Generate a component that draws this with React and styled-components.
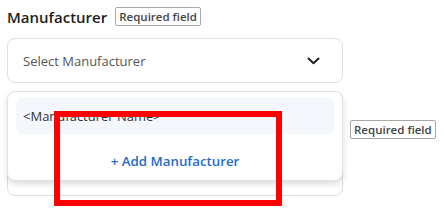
import React from "react";
import styled, { createGlobalStyle } from "styled-components";

const GlobalStyle = createGlobalStyle`
  body {
    margin: 0;
    background: #fff;
    font-family: "Open Sans", "Liberation Sans", sans-serif;
  }
`;

const Page = styled.div`
  position: relative;
  width: 445px;
  height: 212px;
  overflow: hidden;
  padding: 7px 0 0 7px;
  box-sizing: border-box;
`;

const Field = styled.div`
  position: relative;
  width: 336px;
  margin-bottom: ${(p) => p.$gap || 0}px;
`;

const LabelRow = styled.div`
  display: flex;
  align-items: center;
  gap: 8px;
  height: 19px;
  margin-bottom: 12px;
`;

const Title = styled.span`
  font-size: 15px;
  font-weight: 600;
  color: #1e1e1e;
  min-width: ${(p) => p.$minWidth || 0}px;
  visibility: ${(p) => (p.$covered ? "hidden" : "visible")};
`;

const Badge = styled.span`
  border: 1px solid #a8a8a8;
  border-radius: 2px;
  padding: 0 3px;
  font-size: 11.5px;
  line-height: 17px;
  font-weight: 600;
  color: #444;
  white-space: nowrap;
`;

const Select = styled.div`
  display: flex;
  align-items: center;
  justify-content: space-between;
  height: 45px;
  box-sizing: border-box;
  border: 1px solid #dedede;
  border-radius: 8px;
  padding: 0 22px 0 15px;
  font-size: 13px;
  color: #555;
  background: #fff;
`;

const Dropdown = styled.div`
  position: absolute;
  left: 0;
  top: 84px;
  width: 336px;
  height: 90px;
  box-sizing: border-box;
  background: #fff;
  border: 1px solid #e2e2e2;
  border-radius: 8px;
  box-shadow: 0 3px 6px rgba(0, 0, 0, 0.14);
  padding: 6px 8px 0;
  display: flex;
  flex-direction: column;
  z-index: 2;
`;

const Option = styled.div`
  height: 36px;
  display: flex;
  align-items: center;
  padding: 0 7px;
  border-radius: 6px;
  background: #f4f7fc;
  font-size: 13px;
  color: #333;
`;

const AddButton = styled.div`
  flex: 1;
  display: flex;
  align-items: center;
  justify-content: center;
  padding-top: 8px;
  font-size: 13.3px;
  font-weight: 600;
  color: #1f6cc4;
`;

const Highlight = styled.div`
  position: absolute;
  left: 54px;
  top: 111px;
  width: 228px;
  height: 95px;
  box-sizing: border-box;
  border: 6px solid #ff0000;
  z-index: 3;
`;

const Chevron = () => (
  <svg width="13" height="8" viewBox="0 0 13 8" fill="none">
    <path d="M1.5 1.5L6.5 6.2L11.5 1.5" stroke="#222" strokeWidth="2" strokeLinecap="round" strokeLinejoin="round" />
  </svg>
);

export default function App() {
  return (
    <>
      <GlobalStyle />
      <Page>
        <Field $gap={37}>
          <LabelRow>
            <Title>Manufacturer</Title>
            <Badge>Required field</Badge>
          </LabelRow>
          <Select>
            <span>Select Manufacturer</span>
            <Chevron />
          </Select>
          <Dropdown>
            <Option>&lt;Manufacturer Name&gt;</Option>
            <AddButton>+ Add Manufacturer</AddButton>
          </Dropdown>
        </Field>
        <Field>
          <LabelRow>
            <Title $minWidth={335} $covered>Model</Title>
            <Badge>Required field</Badge>
          </LabelRow>
          <Select>
            <span>Select Model</span>
            <Chevron />
          </Select>
        </Field>
        <Highlight />
      </Page>
    </>
  );
}
